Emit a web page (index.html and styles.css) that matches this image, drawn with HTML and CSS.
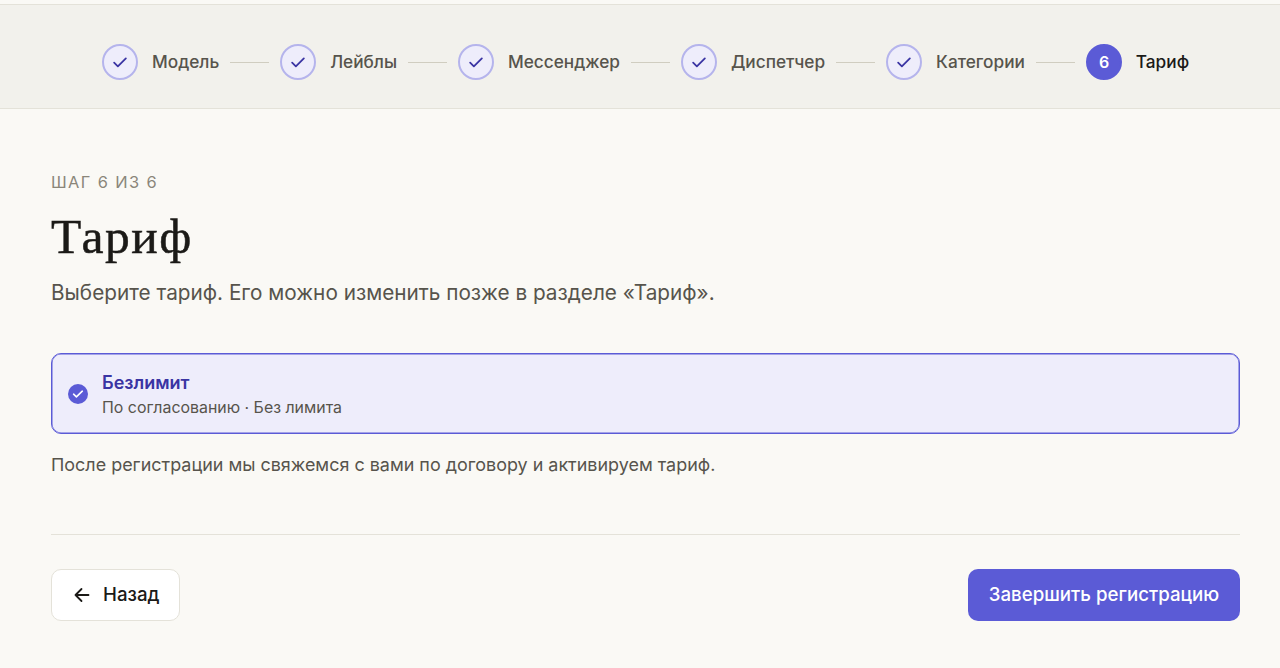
FILE: index.html
```html
<!doctype html>
<html lang="ru">
  <head>
    <meta charset="utf-8">
    <meta name="viewport" content="width=device-width, initial-scale=1.0">
    <title>Регистрация — Тариф</title>
    <link rel="stylesheet" href="styles.css">
  </head>
  <body>
    <header class="stepper-bar">
      <ol class="stepper">
        <li class="step done">
          <span class="step-badge"><svg viewBox="0 0 18 18"><path d="M2.4 9.8l4.2 4.1 9-9"></path></svg></span>
          <span class="step-label">Модель</span>
        </li>
        <li class="step done">
          <span class="step-badge"><svg viewBox="0 0 18 18"><path d="M2.4 9.8l4.2 4.1 9-9"></path></svg></span>
          <span class="step-label">Лейблы</span>
        </li>
        <li class="step done">
          <span class="step-badge"><svg viewBox="0 0 18 18"><path d="M2.4 9.8l4.2 4.1 9-9"></path></svg></span>
          <span class="step-label">Мессенджер</span>
        </li>
        <li class="step done">
          <span class="step-badge"><svg viewBox="0 0 18 18"><path d="M2.4 9.8l4.2 4.1 9-9"></path></svg></span>
          <span class="step-label">Диспетчер</span>
        </li>
        <li class="step done">
          <span class="step-badge"><svg viewBox="0 0 18 18"><path d="M2.4 9.8l4.2 4.1 9-9"></path></svg></span>
          <span class="step-label">Категории</span>
        </li>
        <li class="step current">
          <span class="step-badge">6</span>
          <span class="step-label">Тариф</span>
        </li>
      </ol>
    </header>

    <main class="content">
      <p class="eyebrow">Шаг 6 из 6</p>
      <h1 class="title">Тариф</h1>
      <p class="subtitle">Выберите тариф. Его можно изменить позже в разделе «Тариф».</p>

      <div class="plan">
        <svg class="plan-check" viewBox="0 0 20 20">
          <circle cx="10" cy="10" r="10"></circle>
          <path d="M5.6 10.2l2.8 2.6 5.9-5.6"></path>
        </svg>
        <div>
          <p class="plan-name">Безлимит</p>
          <p class="plan-info">По согласованию · Без лимита</p>
        </div>
      </div>
      <p class="note">После регистрации мы свяжемся с вами по договору и активируем тариф.</p>

      <div class="actions">
        <button class="btn btn-back" type="button">
          <svg viewBox="0 0 16 16"><path d="M14.5 8H1.5M7.5 2l-6 6 6 6"></path></svg>
          Назад
        </button>
        <button class="btn btn-primary" type="button">Завершить регистрацию</button>
      </div>
    </main>
  </body>
</html>
```
FILE: styles.css
```css
* {
  margin: 0;
  padding: 0;
  box-sizing: border-box;
}

body {
  background: #faf9f5;
  font-family: Inter, sans-serif;
  color: #1b1a17;
  min-height: 100vh;
  padding-top: 4px;
}

.stepper-bar {
  height: 105px;
  padding: 11px 0 0 102.3px;
  background: #f2f1ec;
  border-top: 1px solid #e4e2d9;
  border-bottom: 1px solid #e4e2d9;
  display: flex;
  align-items: center;
}

.stepper {
  list-style: none;
  display: flex;
}

.step {
  display: flex;
  align-items: center;
}

.step:not(:last-child)::after {
  content: "";
  width: 39px;
  height: 1px;
  margin: 0 11px 0 11.2px;
  background: #d0cdc0;
}

.step-badge {
  width: 36px;
  height: 36px;
  margin-right: 13.7px;
  border-radius: 50%;
  border: 2px solid #b5b4ec;
  background: #eeedfb;
  display: flex;
  align-items: center;
  justify-content: center;
  font-size: 16px;
  font-weight: 600;
}

.step-badge svg {
  width: 16px;
  height: 16px;
  fill: none;
  stroke: #3a34a3;
  stroke-width: 2;
  stroke-linecap: round;
  stroke-linejoin: round;
}

.step-label {
  font-size: 17.25px;
  line-height: 20px;
  font-weight: 500;
  color: #57544c;
}

.current .step-badge {
  background: #5b5bd6;
  border-color: #5b5bd6;
  color: #fff;
}

.current .step-label {
  color: #1b1a17;
}

.content {
  padding: 61px 40px 0 51px;
}

.eyebrow {
  font-size: 16.4px;
  line-height: 24px;
  letter-spacing: 1.4px;
  text-transform: uppercase;
  color: #8a867a;
}

.title {
  font-family: Gelasio, Georgia, "Liberation Serif", serif;
  font-size: 49.5px;
  line-height: 56px;
  font-weight: 400;
  letter-spacing: 1.5px;
  -webkit-text-stroke: 0.5px currentColor;
  margin-top: 17px;
}

.subtitle {
  font-size: 20.75px;
  line-height: 32px;
  margin-top: 10px;
  color: #57544c;
}

.plan {
  height: 81px;
  margin-top: 44px;
  padding-left: 16px;
  display: flex;
  align-items: center;
  gap: 14px;
  border: 1px solid #5b5bd6;
  box-shadow: inset 0 0 0 0.5px #5b5bd6;
  border-radius: 10px;
  background: #eeedfb;
}

.plan-check {
  width: 20px;
  height: 20px;
  fill: #5b5bd6;
}

.plan-check path {
  fill: none;
  stroke: #fff;
  stroke-width: 1.6;
  stroke-linecap: round;
  stroke-linejoin: round;
}

.plan-name {
  font-size: 18px;
  line-height: 26px;
  font-weight: 600;
  padding-top: 2px;
  color: #3a34a3;
}

.plan-info {
  font-size: 15.9px;
  line-height: 24px;
  color: #57544c;
}

.note {
  font-size: 17.95px;
  line-height: 28px;
  margin-top: 17px;
  color: #57544c;
}

.actions {
  display: flex;
  justify-content: space-between;
  margin-top: 55px;
  padding-top: 33.5px;
  border-top: 1px solid #e4e2d9;
}

.btn {
  height: 52.5px;
  display: flex;
  align-items: center;
  border-radius: 10px;
  font-family: inherit;
  font-size: 18.7px;
  font-weight: 500;
  cursor: pointer;
}

.btn-back {
  width: 129px;
  padding-left: 22px;
  gap: 13px;
  background: #fff;
  border: 1px solid #e4e2d9;
  color: #1b1a17;
}

.btn-back svg {
  width: 16px;
  height: 16px;
  fill: none;
  stroke: currentColor;
  stroke-width: 1.8;
  stroke-linecap: round;
  stroke-linejoin: round;
}

.btn-primary {
  width: 272px;
  justify-content: center;
  background: #5b5bd6;
  border: none;
  color: #fff;
}
```
